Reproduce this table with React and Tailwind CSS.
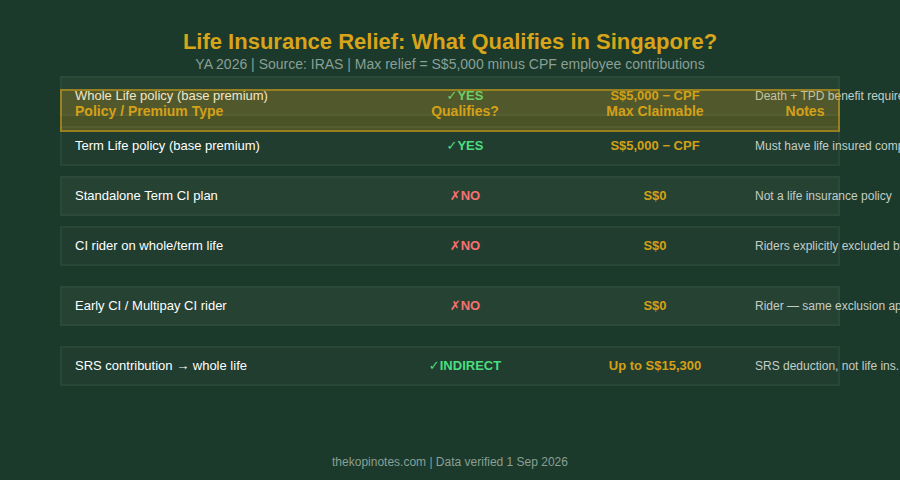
import React from 'react';

const rows = [
  { label: 'Whole Life policy (base premium)', ok: 'yes', status: 'YES', amount: 'S$5,000 − CPF', note: 'Death + TPD benefit required', light: true, mt: 'mt-0' },
  { label: 'Term Life policy (base premium)', ok: 'yes', status: 'YES', amount: 'S$5,000 − CPF', note: 'Must have life insured component', light: false, mt: 'mt-[10px]' },
  { label: 'Standalone Term CI plan', ok: 'no', status: 'NO', amount: 'S$0', note: 'Not a life insurance policy', light: true, mt: 'mt-[10px]' },
  { label: 'CI rider on whole/term life', ok: 'no', status: 'NO', amount: 'S$0', note: 'Riders explicitly excluded by IRAS', light: false, mt: 'mt-[10px]' },
  { label: 'Early CI / Multipay CI rider', ok: 'no', status: 'NO', amount: 'S$0', note: 'Rider — same exclusion applies', light: true, mt: 'mt-[20px]' },
  { label: 'SRS contribution → whole life', ok: 'yes', status: 'INDIRECT', amount: 'Up to S$15,300', note: 'SRS deduction, not life ins. relief', light: false, mt: 'mt-[20px]' },
];

function Row({ r }) {
  return (
    <div className={`${r.mt} flex items-center h-10 pl-[13px] border-2 ${r.light ? 'bg-[#264233] border-[#2b4a3a]' : 'bg-[#213d2f] border-[#294737]'}`}>
      <div className="w-[300px] shrink-0 text-[13px] text-white whitespace-nowrap">{r.label}</div>
      <div className={`w-[180px] shrink-0 text-center text-[13px] font-bold ${r.ok === 'yes' ? 'text-[#4ade80]' : 'text-[#f87171]'}`}>
        <span className="font-['DejaVu_Sans',sans-serif] font-bold">{r.ok === 'yes' ? '✓' : '✗'}</span>{r.status}
      </div>
      <div className="w-[200px] shrink-0 text-center text-[13px] font-bold text-[#d4a017]">{r.amount}</div>
      <div className="shrink-0 text-[12px] text-[#c3cdc7] whitespace-nowrap">{r.note}</div>
    </div>
  );
}

export default function App() {
  return (
    <div className="w-[900px] h-[480px] overflow-hidden bg-[#1b3a2b] font-['Liberation_Sans',Arial,sans-serif] flex flex-col">
      <h1 className="pt-[29px] text-center text-[22px] leading-[26px] font-bold text-[#d8a419]">
        Life Insurance Relief: What Qualifies in Singapore?
      </h1>
      <p className="text-center text-[14px] leading-[18px] text-[#8a9f95]">
        YA 2026 | Source: IRAS | Max relief = S$5,000 minus CPF employee contributions
      </p>

      <div className="relative ml-[60px] w-[780px] mt-[3px]">
        {rows.map((r, i) => <Row key={i} r={r} />)}

        {/* header bar sits over the first row */}
        <div className="absolute left-0 top-[13px] w-[780px] h-[43px] flex items-center pl-[13px] pt-[2px] bg-[#d4a017]/25 border-2 border-[#d4a017]/55">
          <div className="w-[300px] shrink-0 text-[14px] font-bold text-[#d4a017]">Policy / Premium Type</div>
          <div className="w-[180px] shrink-0 text-center text-[14px] font-bold text-[#d4a017]">Qualifies?</div>
          <div className="w-[200px] shrink-0 text-center text-[14px] font-bold text-[#d4a017]">Max Claimable</div>
          <div className="w-[100px] shrink-0 text-center text-[14px] font-bold text-[#d4a017]">Notes</div>
        </div>
      </div>

      <div className="mt-auto pb-[9px] text-center text-[12px] text-[#8a9f95]">
        thekopinotes.com | Data verified 1 Sep 2026
      </div>
    </div>
  );
}
